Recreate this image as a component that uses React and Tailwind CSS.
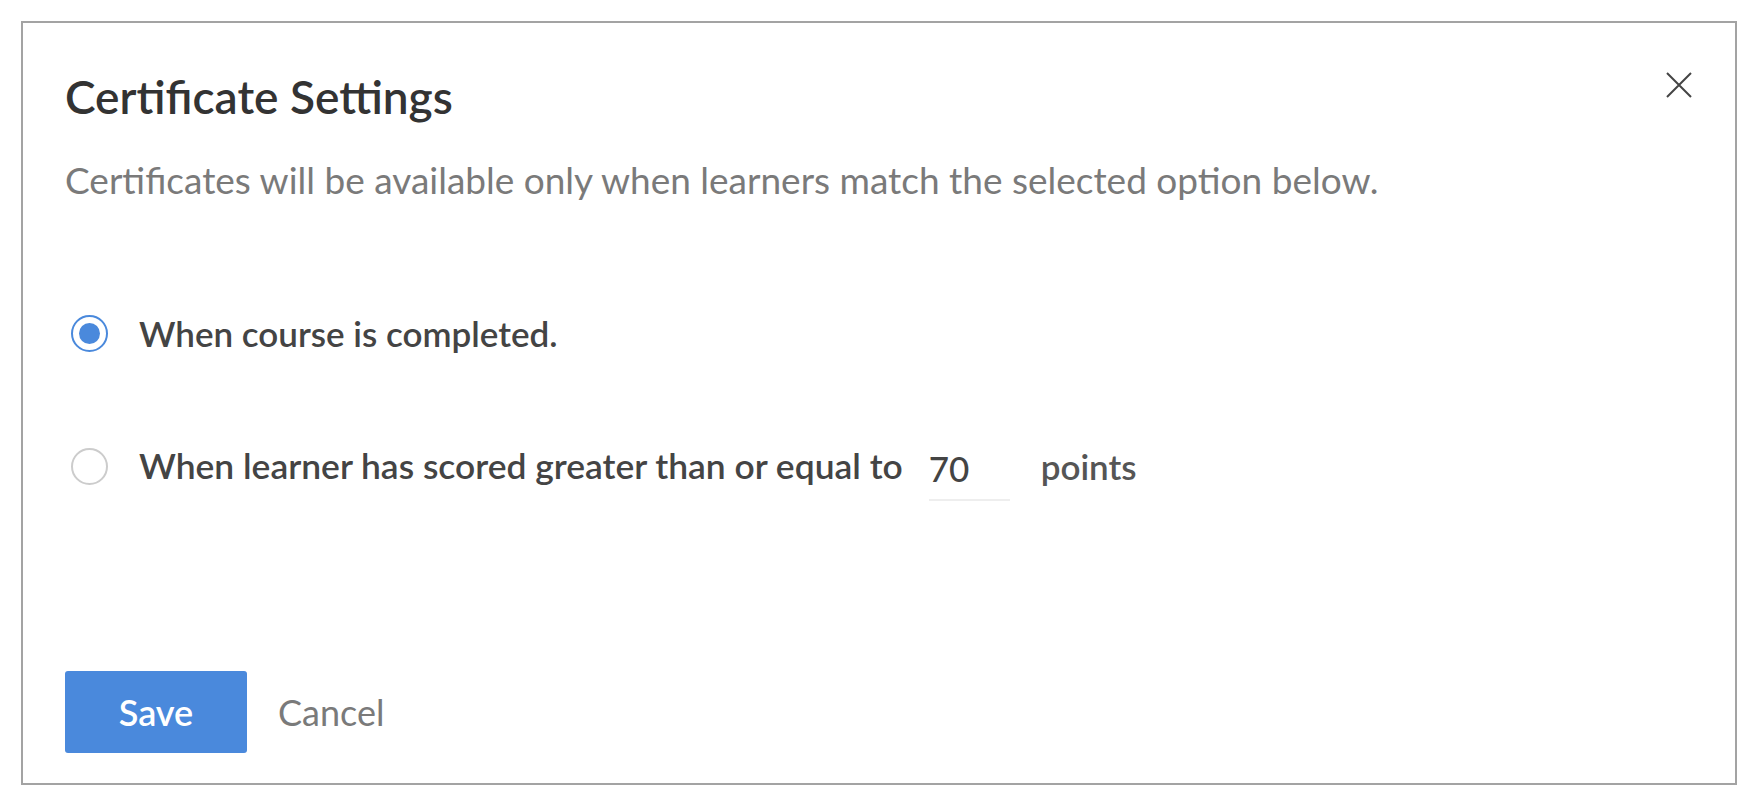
import React, { useState } from 'react';

export default function App() {
  const [choice, setChoice] = useState('completed');
  const [points, setPoints] = useState('70');

  return (
    <div className="w-[1758px] h-[806px] bg-white p-[21px] font-['Lato',sans-serif]">
      <div className="h-full border-2 border-[#a3a3a3] bg-white flex flex-col pl-[42px] pr-[45px] pt-[46px] pb-[30px]">
        {/* Header */}
        <div className="flex items-start justify-between">
          <h1 className="text-[46px] leading-[56px] font-semibold text-[#333333]">Certificate Settings</h1>
          <button className="mt-[1px] mr-[-4px] text-[#444444]" aria-label="Close">
            <svg width="30" height="30" viewBox="0 0 30 30" fill="none" stroke="currentColor" strokeWidth="2">
              <path d="M3 3 L27 27 M27 3 L3 27" />
            </svg>
          </button>
        </div>
        <p className="mt-[31px] text-[37px] leading-[48px] text-[#7a7a7a]">
          Certificates will be available only when learners match the selected option below.
        </p>

        {/* Options */}
        <div className="mt-[105px] ml-[6px] flex flex-col gap-[74px]">
          <label className="flex items-center gap-[31px] cursor-pointer" onClick={() => setChoice('completed')}>
            <Radio checked={choice === 'completed'} />
            <span className="text-[35px] leading-[48px] font-semibold text-[#444444]">When course is completed.</span>
          </label>
          <label className="flex items-center gap-[26px] cursor-pointer" onClick={() => setChoice('score')}>
            <span className="mr-[5px] flex"><Radio checked={choice === 'score'} /></span>
            <span className="text-[35.4px] leading-[48px] font-semibold text-[#444444]">When learner has scored greater than or equal to</span>
            <input
              value={points}
              onChange={(e) => setPoints(e.target.value)}
              className="w-[81px] border-b-2 border-[#eeeeee] text-[35px] leading-[48px] font-medium text-[#444444] pl-0 pb-[7px] pt-[13px] outline-none"
            />
            <span className="ml-[5px] text-[35px] leading-[48px] font-semibold text-[#555555]">points</span>
          </label>
        </div>

        {/* Footer */}
        <div className="mt-auto flex items-center gap-[31px]">
          <button className="w-[182px] h-[82px] rounded-[3px] bg-[#4a89dc] text-white text-[36px] font-semibold">Save</button>
          <button className="text-[36px] text-[#7a7a7a]">Cancel</button>
        </div>
      </div>
    </div>
  );
}

function Radio({ checked }) {
  return (
    <span
      className={
        checked
          ? 'w-[37px] h-[37px] rounded-full border-2 border-[#4a89dc] flex items-center justify-center shrink-0'
          : 'w-[37px] h-[37px] rounded-full border-2 border-[#cccccc] flex items-center justify-center shrink-0'
      }
    >
      {checked && <span className="w-[21px] h-[21px] rounded-full bg-[#4a89dc]" />}
    </span>
  );
}
